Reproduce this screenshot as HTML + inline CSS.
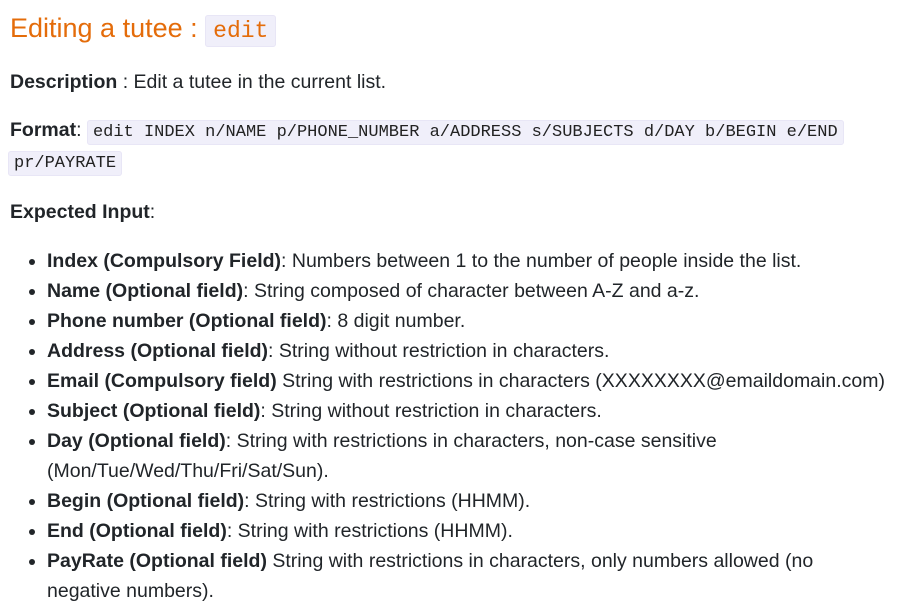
<!DOCTYPE html>
<html><head><meta charset="utf-8"><style>
body{margin:0;background:#fff;color:#212529;font-family:"Liberation Sans",sans-serif;font-size:19.5px;width:917px;height:605px;overflow:hidden}
.w{position:absolute;left:10px;top:0;width:900px}
h1{position:absolute;top:8px;left:0;margin:0;font-weight:normal;color:#e46c0a;font-size:27px;line-height:40px;white-space:nowrap}
h1 code{font-size:23px;padding:2px 7px;}
code{font-family:"Liberation Mono",monospace;background:#f0effa;border-radius:3px;border:1px solid #e8e6f6}
p{position:absolute;left:0;margin:0;line-height:31px;white-space:nowrap}
p code{font-size:17px;padding:2px 5px;color:#222}
ul{position:absolute;left:0;top:246px;margin:0;padding-left:37px;line-height:30px}
li{white-space:nowrap}
</style></head><body><div class="w">
<h1>Editing a tutee : <code>edit</code></h1>
<p style="top:67px"><b>Description</b> : Edit a tutee in the current list.</p>
<p style="top:115px"><b>Format</b>: <code>edit INDEX n/NAME p/PHONE_NUMBER a/ADDRESS s/SUBJECTS d/DAY b/BEGIN e/END</code></p>
<p style="top:146px"><code style="margin-left:-2px">pr/PAYRATE</code></p>
<p style="top:197px"><b>Expected Input</b>:</p>
<ul>
<li><b>Index (Compulsory Field)</b>: Numbers between 1 to the number of people inside the list.</li>
<li><b>Name (Optional field)</b>: String composed of character between A-Z and a-z.</li>
<li><b>Phone number (Optional field)</b>: 8 digit number.</li>
<li><b>Address (Optional field)</b>: String without restriction in characters.</li>
<li><b>Email (Compulsory field)</b> String with restrictions in characters (XXXXXXXX@emaildomain.com)</li>
<li><b>Subject (Optional field)</b>: String without restriction in characters.</li>
<li><b>Day (Optional field)</b>: String with restrictions in characters, non-case sensitive<br>(Mon/Tue/Wed/Thu/Fri/Sat/Sun).</li>
<li><b>Begin (Optional field)</b>: String with restrictions (HHMM).</li>
<li><b>End (Optional field)</b>: String with restrictions (HHMM).</li>
<li><b>PayRate (Optional field)</b> String with restrictions in characters, only numbers allowed (no<br>negative numbers).</li>
</ul>
</div></body></html>
